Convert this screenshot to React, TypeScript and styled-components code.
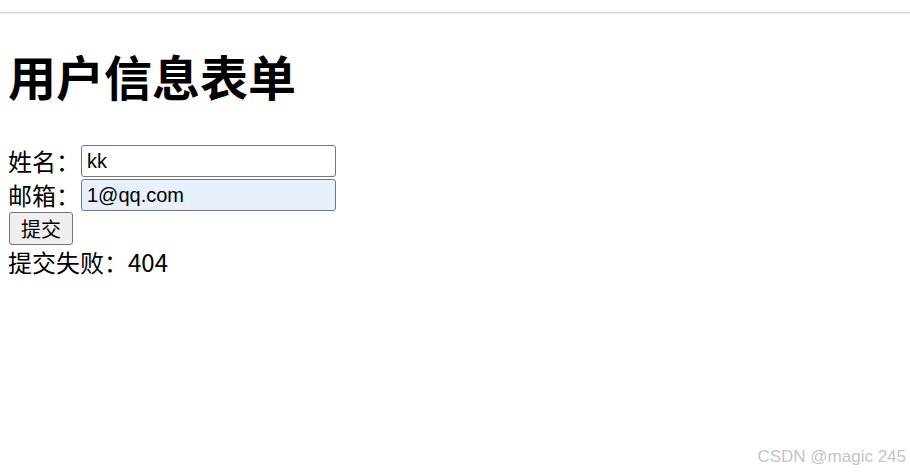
import React, { useState } from "react";
import styled, { createGlobalStyle } from "styled-components";

const GlobalStyle = createGlobalStyle`
    html, body {
        margin: 0;
        padding: 0;
        background: #ffffff;
    }
    body {
        font-family: "Liberation Sans", "Noto Sans CJK SC", sans-serif;
        color: #000000;
    }
`;

const Page = styled.div`
    position: relative;
    width: 910px;
    height: 472px;
    overflow: hidden;
`;

const TopRule = styled.div`
    height: 12px;
    border-bottom: 1px solid #d6d6d6;
    box-shadow: 0 1px 0 #eeeeee;
`;

const Content = styled.div`
    padding: 0 8px;
`;

const Title = styled.h1`
    margin: 38px 0 46px;
    font-family: "Noto Sans CJK SC", sans-serif;
    font-size: 48px;
    line-height: 48px;
    font-weight: 700;
`;

const Form = styled.form`
    display: flex;
    flex-direction: column;
    align-items: flex-start;
`;

const Row = styled.label<{ gap?: number }>`
    display: flex;
    align-items: center;
    height: 32px;
    margin-bottom: ${(p) => p.gap ?? 2}px;
`;

const LabelText = styled.span`
    width: 72px;
    font-family: "Noto Sans CJK SC", sans-serif;
    font-size: 24px;
    line-height: 30px;
`;

const Field = styled.input<{ filled?: boolean }>`
    box-sizing: border-box;
    width: 255px;
    height: 32px;
    margin: 0 0 0 1px;
    padding: 0 5px;
    border: 1px solid #767676;
    border-radius: 3px;
    background: ${(p) => (p.filled ? "#e8f0fe" : "#ffffff")};
    font-family: "Liberation Sans", sans-serif;
    font-size: 20px;
    color: #000000;
    outline: none;
`;

const Submit = styled.button`
    box-sizing: border-box;
    height: 33px;
    margin: 0 0 0 1px;
    padding: 0 11px;
    border: 1px solid #767676;
    border-radius: 3px;
    background: #efefef;
    font-family: "Noto Sans CJK SC", sans-serif;
    font-size: 20px;
    line-height: 1;
    color: #000000;
`;

const Result = styled.div`
    margin-top: 1px;
    font-family: "Noto Sans CJK SC", sans-serif;
    font-size: 24px;
    line-height: 32px;
`;

const Watermark = styled.div`
    position: absolute;
    right: 4px;
    bottom: 5px;
    font-family: "Liberation Sans", sans-serif;
    font-size: 17px;
    color: #c4c4c4;
`;

export default function App() {
    const [name, setName] = useState("kk");
    const [email, setEmail] = useState("1@qq.com");

    return <Page>
        <GlobalStyle />
        <TopRule />
        <Content>
            <Title>用户信息表单</Title>
            <Form onSubmit={(e) => e.preventDefault()}>
                <Row>
                    <LabelText>姓名：</LabelText>
                    <Field value={name} onChange={(e) => setName(e.target.value)} />
                </Row>
                <Row gap={1}>
                    <LabelText>邮箱：</LabelText>
                    <Field filled value={email} onChange={(e) => setEmail(e.target.value)} />
                </Row>
                <Submit type="submit">提交</Submit>
            </Form>
            <Result>提交失败：404</Result>
        </Content>
        <Watermark>CSDN @magic 245</Watermark>
    </Page>
}
